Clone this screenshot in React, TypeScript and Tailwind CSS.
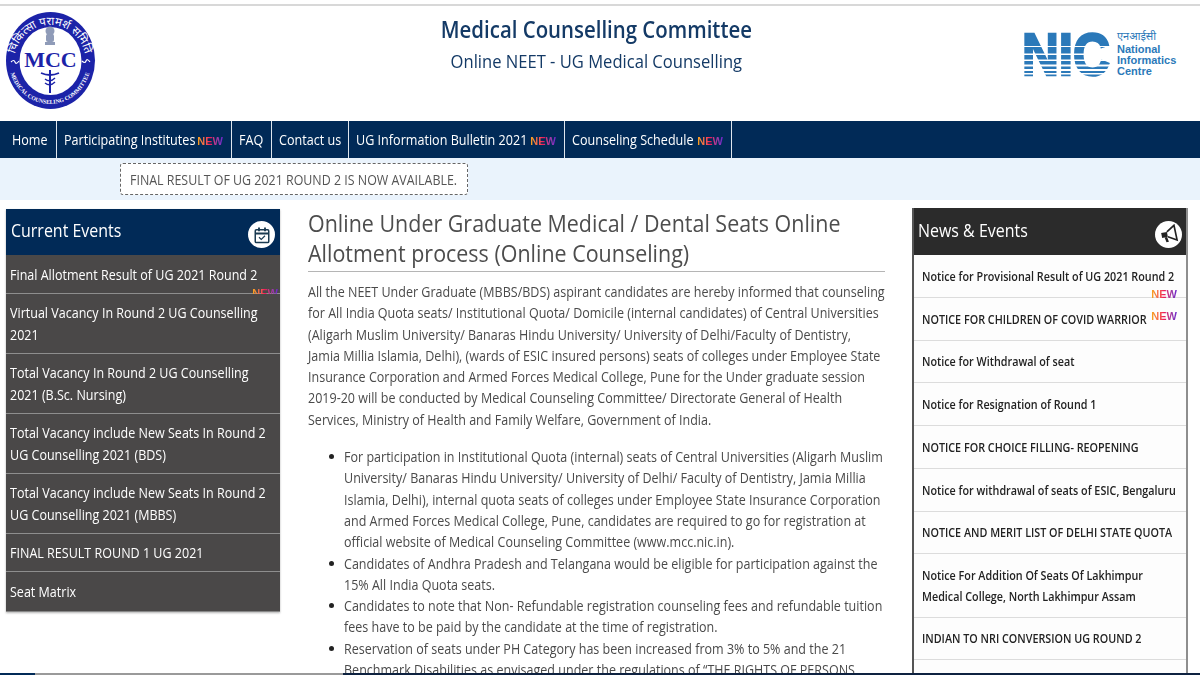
import React from "react";

const font = { fontFamily: '"Open Sans", "Noto Sans", sans-serif' };

function New({ className = "" }: { className?: string }) {
  return (
    <span className={"inline-block bg-gradient-to-r from-[#f7a800] via-[#f0105a] to-[#6a1fd0] bg-clip-text text-[11px] leading-[10px] font-bold text-transparent [font-family:'Liberation_Sans',sans-serif] " + className}>
      NEW
    </span>
  );
}

/* The reference is a horizontally squeezed capture, so text is narrowed the same way. */
function T({ children, className = "" }: { children: React.ReactNode; className?: string }) {
  return <span className={"block origin-left scale-x-[0.887] " + className}>{children}</span>;
}

function B({ children, className = "" }: { children: React.ReactNode; className?: string }) {
  return <span className={"block origin-left scale-x-[0.895] " + className}>{children}</span>;
}

function McpLogo() {
  return (
    <svg width="92" height="100" viewBox="0 0 92 100" className="block">
      <defs>
        <path id="topArc" d="M 9 52 A 36 38 0 0 1 81 52" />
        <path id="botArc" d="M 4 50 A 41 43 0 0 0 86 50" />
      </defs>
      <ellipse cx="45.500" cy="49.500" rx="44.500" ry="48.500" fill="#1c23a8" />
      <ellipse cx="45.500" cy="50" rx="31" ry="34" fill="#fff" />
      <text fontSize="11.500" fill="#fff" fontFamily="'Noto Sans',sans-serif" textAnchor="middle">
        <textPath href="#topArc" startOffset="50%">चिकित्सा परामर्श समिति</textPath>
      </text>
      <text fontSize="5.800" fontWeight="700" fill="#fff" fontFamily="'Liberation Serif',serif" textAnchor="middle">
        <textPath href="#botArc" startOffset="50%">MEDICAL COUNSELING COMMITTEE</textPath>
      </text>
      <path d="M6 51q3-3 4 0t4-1M77 50q3 3 4 0t4 1" stroke="#fff" strokeWidth="1.200" fill="none" />
      <g fill="#8f9bb8">
        <circle cx="45" cy="20" r="4.500" />
        <rect x="41" y="23" width="8" height="8" rx="2" />
        <rect x="40" y="31" width="10" height="3" />
      </g>
      <text x="45.500" y="56" textAnchor="middle" fontSize="22" fontWeight="700" fill="#1c23a8" fontFamily="'Liberation Serif',serif">MCC</text>
      <g stroke="#1c23a8" fill="none">
        <path d="M45 59V82" strokeWidth="2" />
        <path d="M36 62Q45 66 54 62" strokeWidth="1.800" />
        <path d="M40 68Q45 72 50 67M40 72Q45 76 50 71" strokeWidth="1.400" />
      </g>
    </svg>
  );
}

function NicLogo() {
  return (
    <svg width="160" height="60" viewBox="0 0 160 60" className="block">
      <g transform="scale(0.85 1)">
        <text x="0" y="47" fontSize="60" fontWeight="700" fill="#2b79b9" stroke="#2b79b9" strokeWidth="2.500" fontFamily="'Liberation Sans',sans-serif">NIC</text>
      </g>
      <g fill="#fff">
        <rect x="0" y="18" width="91" height="1" />
        <rect x="0" y="25.500" width="91" height="1.500" />
        <rect x="0" y="31.500" width="91" height="1.500" />
        <rect x="0" y="36.500" width="91" height="2" />
        <rect x="0" y="41" width="91" height="2" />
        <rect x="0" y="45" width="91" height="1.500" />
      </g>
      <g fill="#2b79b9" fontFamily="'Liberation Sans',sans-serif" fontWeight="700" fontSize="11">
        <text x="95" y="12" fontSize="11" fontWeight="400" fontFamily="'Noto Sans',sans-serif">एनआईसी</text>
        <text x="95" y="25">National</text>
        <text x="95" y="36">Informatics</text>
        <text x="95" y="47">Centre</text>
      </g>
    </svg>
  );
}

const navItems: [string, boolean, string][] = [
  ["Home", false, "w-[57px]"],
  ["Participating Institutes", true, "w-[175px]"],
  ["FAQ", false, "w-[40px]"],
  ["Contact us", false, "w-[77px]"],
  ["UG Information Bulletin 2021", true, "w-[216px]"],
  ["Counseling Schedule", true, "w-[167px]"],
];

const currentEvents: [string, string][] = [
  ["Final Allotment Result of UG 2021 Round 2", "h-[39px] pt-[1px]"],
  ["Virtual Vacancy In Round 2 UG Counselling 2021", "h-[60px]"],
  ["Total Vacancy In Round 2 UG Counselling 2021 (B.Sc. Nursing)", "h-[60px]"],
  ["Total Vacancy include New Seats In Round 2 UG Counselling 2021 (BDS)", "h-[60px]"],
  ["Total Vacancy include New Seats In Round 2 UG Counselling 2021 (MBBS)", "h-[60px]"],
  ["FINAL RESULT ROUND 1 UG 2021", "h-[38px]"],
  ["Seat Matrix", "h-[39px]"],
];

const news: [string, string][] = [
  ["Notice for Provisional Result of UG 2021 Round 2", "h-[43px]"],
  ["NOTICE FOR CHILDREN OF COVID WARRIOR", "h-[43px]"],
  ["Notice for Withdrawal of seat", "h-[42px]"],
  ["Notice for Resignation of Round 1", "h-[43px]"],
  ["NOTICE FOR CHOICE FILLING- REOPENING", "h-[43px]"],
  ["Notice for withdrawal of seats of ESIC, Bengaluru", "h-[43px]"],
  ["NOTICE AND MERIT LIST OF DELHI STATE QUOTA", "h-[42px]"],
  ["Notice For Addition Of Seats Of Lakhimpur Medical College, North Lakhimpur Assam", "h-[64px]"],
  ["INDIAN TO NRI CONVERSION UG ROUND 2", "h-[42px]"],
];

export default function App() {
  return (
    <div style={font} className="relative h-[675px] w-[1200px] overflow-hidden bg-white text-[#444]">
      <div className="h-[6px] border-b-2 border-[#d8d8d8]" />
      <header className="flex h-[115px] items-start">
        <div className="ml-[5px] mt-[5px] flex-1"><McpLogo /></div>
        <div className="flex w-[352px] flex-col items-center pt-[8px] pl-[6px] text-center">
          <h1 className="scale-x-[0.887] text-[23px] leading-[30px] font-semibold whitespace-nowrap text-[#143a66]">Medical Counselling Committee</h1>
          <p className="mt-[2px] scale-x-[0.887] text-[18.700px] leading-[30px] whitespace-nowrap text-[#143a66]">Online NEET - UG Medical Counselling</p>
        </div>
        <div className="mt-[22px] flex flex-1 justify-end pr-[18px]"><NicLogo /></div>
      </header>

      <nav className="flex h-[37px] bg-[#012a57] text-[14.200px] text-white">
        {navItems.map(([label, isNew, w]) => (
          <a key={label} className={"relative flex h-full items-center border-r border-[#dfe6ee] pl-[7px] whitespace-nowrap first:pl-[12px] " + w}>
            <T>{label}</T>
            {isNew && <New className="absolute right-[8px] top-[15px]" />}
          </a>
        ))}
      </nav>

      <div className="h-[42px] bg-[#eaf3fc] pl-[120px] pt-[5px]">
        <div className="flex h-[32px] w-[348px] items-center rounded-[3px] border border-dashed border-[#666] bg-white pl-[9px] text-[14px] whitespace-nowrap text-[#555]">
          <T>FINAL RESULT OF UG 2021 ROUND 2 IS NOW AVAILABLE.</T>
        </div>
      </div>

      <main className="flex items-start pt-[8px]">
        <aside className="ml-[6px] mt-[1px] w-[274px] shrink-0 border-b border-[#888] shadow-[0_1px_2px_rgba(0,0,0,0.3)]">
          <div className="flex h-[46px] items-center justify-between bg-[#012a57] pr-[5px] pl-[5px] text-white">
            <span className="-mt-[4px] origin-left scale-x-[0.887] text-[18px]">Current Events</span>
            <span className="mt-[5px] flex h-[27px] w-[27px] items-center justify-center rounded-full bg-white">
              <svg width="18" height="18" viewBox="0 0 24 24" fill="none" stroke="#1a3a50" strokeWidth="2">
                <rect x="3" y="5" width="18" height="17" rx="1.500" />
                <path d="M3 10h18M8 2v5M16 2v5" strokeWidth="2.500" />
                <path d="M8 15l3 3 5-5" strokeWidth="1.500" />
              </svg>
            </span>
          </div>
          {currentEvents.map(([t, h], i) => (
            <div key={t} className={"relative flex items-center border-b border-[#8e8e8e] bg-[#4a4848] pl-[4px] text-[14px] leading-[22px] text-white last:border-b-0 " + h}>
              <B className="w-[295px] shrink-0">{t}</B>
              {i === 0 && <New className="absolute right-[2px] bottom-[-5px]" />}
            </div>
          ))}
        </aside>

        <section className="ml-[28px] w-[577px] shrink-0 text-[14px] leading-[21.300px] whitespace-nowrap text-[#4a4a4a]">
          <h2 className="h-[64px] border-b border-[#b5b5b5] text-[24.200px] leading-[30px] text-[#4d4d4d]">
            <T>Online Under Graduate Medical / Dental Seats Online<br />Allotment process (Online Counseling)</T>
          </h2>
          <B className="mt-[9px]">
            All the NEET Under Graduate (MBBS/BDS) aspirant candidates are hereby informed that counseling<br />
            for All India Quota seats/ Institutional Quota/ Domicile (internal candidates) of Central Universities<br />
            (Aligarh Muslim University/ Banaras Hindu University/ University of Delhi/Faculty of Dentistry,<br />
            Jamia Millia Islamia, Delhi), (wards of ESIC insured persons) seats of colleges under Employee State<br />
            Insurance Corporation and Armed Forces Medical College, Pune for the Under graduate session<br />
            2019-20 will be conducted by Medical Counseling Committee/ Directorate General of Health<br />
            Services, Ministry of Health and Family Welfare, Government of India.
          </B>
          <ul className="mt-[16px] list-none pl-[36px]">
            {[
              "For participation in Institutional Quota (internal) seats of Central Universities (Aligarh Muslim\nUniversity/ Banaras Hindu University/ University of Delhi/ Faculty of Dentistry, Jamia Millia\nIslamia, Delhi), internal quota seats of colleges under Employee State Insurance Corporation\nand Armed Forces Medical College, Pune, candidates are required to go for registration at\nofficial website of Medical Counseling Committee (www.mcc.nic.in).",
              "Candidates of Andhra Pradesh and Telangana would be eligible for participation against the\n15% All India Quota seats.",
              "Candidates to note that Non- Refundable registration counseling fees and refundable tuition\nfees have to be paid by the candidate at the time of registration.",
              "Reservation of seats under PH Category has been increased from 3% to 5% and the 21\nBenchmark Disabilities as envisaged under the regulations of “THE RIGHTS OF PERSONS",
            ].map((item) => (
              <li key={item} className="relative">
                <span className="absolute top-[8px] left-[-15px] h-[5px] w-[5px] rounded-full bg-[#222]" />
                <B className="whitespace-pre">{item}</B>
              </li>
            ))}
          </ul>
        </section>

        <aside className="ml-[27px] w-[276px] shrink-0 border-r-2 border-l-2 border-r-[#8e8e8e] border-l-[#555]">
          <div className="flex h-[47px] items-center justify-between bg-[#2b2b2b] pr-[4px] pl-[4px] text-white">
            <span className="-mt-[3px] origin-left scale-x-[0.887] text-[18px]">News &amp; Events</span>
            <span className="mt-[5px] flex h-[27px] w-[27px] items-center justify-center rounded-full bg-white">
              <svg width="20" height="20" viewBox="0 0 24 24" fill="none">
                <g transform="rotate(-12 12 12)">
                  <path d="M3 9h7v6H3z" fill="#222" />
                  <path d="M6 15l1 6h3l-1-6z" fill="#222" />
                  <path d="M10 9l10-6v18l-10-6" stroke="#222" strokeWidth="2" />
                </g>
              </svg>
            </span>
          </div>
          {news.map(([t, h], i) => (
            <div key={t} className={"relative flex items-center border-b border-[#dcdcdc] bg-[#fdfdfd] pl-[8px] text-[12.150px] leading-[21px] font-semibold text-[#222] " + h}>
              <T className="w-[295px] shrink-0">{t}</T>
              {i === 0 && <New className="absolute right-[9px] bottom-[-2px]" />}
              {i === 1 && <New className="absolute right-[9px] top-[13px]" />}
            </div>
          ))}
          <div className="h-[20px] bg-[#fdfdfd]" />
        </aside>
      </main>

      <div className="absolute right-0 bottom-0 left-0 flex h-[2px]">
        <div className="w-[35px] bg-[#012a57]" />
        <div className="w-[308px] bg-[#9a9a9a]" />
        <div className="flex-1 bg-[#0e2240]" />
      </div>
    </div>
  );
}
